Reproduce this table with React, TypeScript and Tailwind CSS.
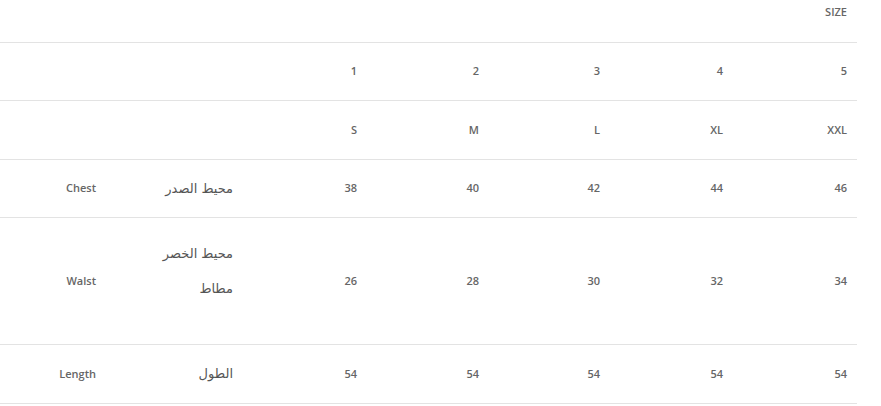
import React from "react";

const cols = "grid grid-cols-[106px_137px_124px_122px_121px_123px_124px] w-[857px] border-b border-[#e3e3e3]";
const txt = "pr-[10px] text-[11px] font-semibold text-[#666]";
const cell = `flex items-center justify-end ${txt}`;
const ar = "font-['DejaVu_Sans',sans-serif] font-normal text-[13px] text-[#555]";

function Row({ h, cells }: { h: string; cells: React.ReactNode[] }) {
  return (
    <div className={`${cols} ${h}`}>
      {cells.map((c, i) => (
        <div key={i} className={cell}>
          {c}
        </div>
      ))}
    </div>
  );
}

export default function App() {
  return (
    <div className="w-[881px] h-[406px] bg-white overflow-hidden font-['Open_Sans',sans-serif]">
      <div className={`${cols} h-[43px]`}>
        {["", "", "", "", "", ""].map((c, i) => (
          <div key={i} />
        ))}
        <div className={`flex items-start justify-end pt-[4px] ${txt}`}>SIZE</div>
      </div>
      <Row h="h-[58px]" cells={["", "", "1", "2", "3", "4", "5"]} />
      <Row h="h-[59px]" cells={["", "", "S", "M", "L", "XL", "XXL"]} />
      <Row
        h="h-[58px]"
        cells={[
          "Chest",
          <span className={ar} dir="rtl">محيط الصدر</span>,
          "38",
          "40",
          "42",
          "44",
          "46",
        ]}
      />
      <div className={`${cols} h-[127px]`}>
        <div className={cell}>Walst</div>
        <div className={`flex flex-col items-end justify-center gap-[16px] pb-[20px] ${txt}`}>
          <span className={ar} dir="rtl">محيط الخصر</span>
          <span className={ar} dir="rtl">مطاط</span>
        </div>
        {["26", "28", "30", "32", "34"].map((v) => (
          <div key={v} className={cell}>
            {v}
          </div>
        ))}
      </div>
      <Row
        h="h-[59px]"
        cells={[
          "Length",
          <span className={ar} dir="rtl">الطول</span>,
          "54",
          "54",
          "54",
          "54",
          "54",
        ]}
      />
    </div>
  );
}
